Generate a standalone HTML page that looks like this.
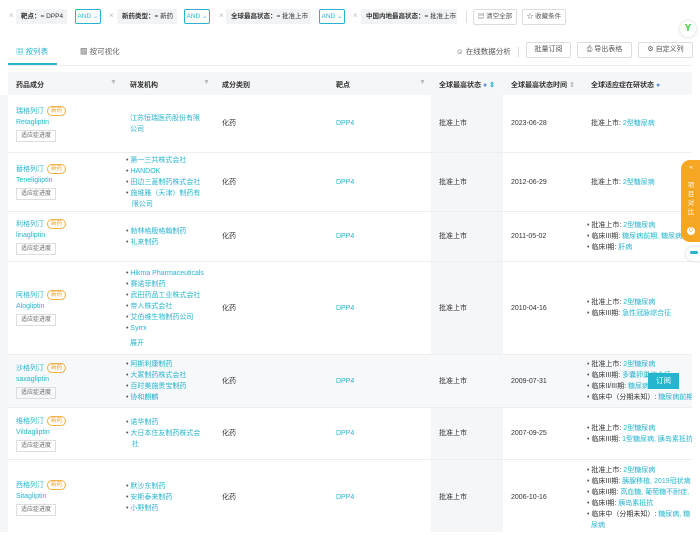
<!DOCTYPE html>
<html><head><meta charset="utf-8"><style>
*{box-sizing:border-box;margin:0;padding:0}
body{width:700px;height:532px;overflow:hidden;background:#fff;font-family:"Liberation Sans","Noto Sans CJK SC",sans-serif;font-size:7px;color:#333;position:relative}
.a{position:absolute;white-space:nowrap}
.x{color:#bbb;font-size:8px}
.chip{background:#f2f3f5;height:15px;line-height:15px;padding:0 5px;font-size:6.5px;color:#333}
.chip b{font-weight:bold}
.and{border:1px solid #26b5cf;color:#26b5cf;height:15px;line-height:13px;font-size:6.5px;text-align:center;border-radius:2px}
.btn{border:1px solid #ddd;height:16px;line-height:14px;font-size:7px;text-align:center;color:#555;border-radius:2px}
.row{position:absolute;left:8px;width:684px;border-bottom:1px solid #eee}
.c{position:absolute;top:0;bottom:0;display:flex;flex-direction:column;justify-content:center;line-height:11px;white-space:nowrap}
.t{color:#26b5cf}
.nm{color:#26b5cf;font-size:7px;line-height:11px}
.bd{display:inline-block;border:1px solid #f5b041;color:#f0a020;border-radius:6px;font-size:5.5px;line-height:8px;padding:0 3px;margin-left:3px;vertical-align:1px}
.pb{display:inline-block;border:1px solid #ddd;font-size:6px;color:#666;padding:0 4px;line-height:10px;margin-top:2px;white-space:nowrap}
.li:before{content:"• ";color:#555}
.g{color:#555}
</style></head><body>
<div class="a" style="left:0;top:95px;width:8px;height:437px;background:#f4f5f7"></div>
<span class="a x" style="left:9px;top:11px">×</span>
<div class="a chip" style="left:16px;top:9px;width:51px"><b>靶点：</b>= DPP4</div>
<div class="a and" style="left:75px;top:9px;width:26px">AND ⌄</div>
<span class="a x" style="left:109px;top:11px">×</span>
<div class="a chip" style="left:117px;top:9px;width:60px"><b>新药类型：</b>= 新药</div>
<div class="a and" style="left:184px;top:9px;width:26px">AND ⌄</div>
<span class="a x" style="left:219px;top:11px">×</span>
<div class="a chip" style="left:226px;top:9px;width:85px"><b>全球最高状态：</b>= 批准上市</div>
<div class="a and" style="left:319px;top:9px;width:26px">AND ⌄</div>
<span class="a x" style="left:353px;top:11px">×</span>
<div class="a chip" style="left:361px;top:9px;width:96px"><b>中国内地最高状态：</b>= 批准上市</div>
<div class="a" style="left:466px;top:11px;width:1px;height:12px;background:#ddd"></div>
<div class="a btn" style="left:473px;top:9px;width:44px;font-size:6.5px">▤ 清空全部</div>
<div class="a btn" style="left:522px;top:9px;width:44px;font-size:6.5px">☆ 收藏条件</div>
<div class="a" style="left:680px;top:21px;width:16px;height:16px;border-radius:50%;background:#fff;box-shadow:0 0 3px #ccc;color:#3c3;font-weight:bold;font-size:10px;text-align:center;line-height:16px">Y</div>
<div class="a" style="left:16px;top:46px;color:#26b5cf;font-size:7.5px">▦ 按列表</div>
<div class="a" style="left:80px;top:46px;color:#666;font-size:7.5px">▩ 按可视化</div>
<div class="a" style="left:8px;top:63px;width:49px;height:2px;background:#26b5cf"></div>
<div class="a" style="left:8px;top:65px;width:684px;height:1px;background:#eee"></div>
<div class="a g" style="left:456px;top:46px;font-size:7.5px">☺ 在线数据分析</div>
<div class="a" style="left:518px;top:47px;width:1px;height:10px;background:#ddd"></div>
<div class="a btn" style="left:526px;top:42px;width:45px">批量订阅</div>
<div class="a btn" style="left:577px;top:42px;width:55px">⎙ 导出表格</div>
<div class="a btn" style="left:638px;top:42px;width:55px">⚙ 自定义列</div>
<div class="a" style="left:8px;top:72px;width:684px;height:23px;background:#f5f6f8"></div>
<div class="a" style="left:431px;top:72px;width:72px;height:460px;background:#f5f6f8"></div>
<div class="a" style="left:8px;top:355px;width:684px;height:53px;background:#f7f8fa"></div>
<div class="a" style="top:80px;left:16px;font-weight:bold">药品成分</div><span class="a" style="left:110px;top:79px;color:#bbb">▼</span>
<div class="a" style="top:80px;left:130px;font-weight:bold">研发机构</div><span class="a" style="left:203px;top:79px;color:#bbb">▼</span>
<div class="a" style="top:80px;left:222px;font-weight:bold">成分类别</div>
<div class="a" style="top:80px;left:336px;font-weight:bold">靶点</div><span class="a" style="left:419px;top:79px;color:#bbb">▼</span>
<div class="a" style="top:80px;left:439px;font-weight:bold">全球最高状态 <span style="color:#6a8fd0">●</span> <span style="color:#26b5cf">⇕</span></div>
<div class="a" style="top:80px;left:511px;font-weight:bold">全球最高状态时间 <span style="color:#bbb">⇕</span></div>
<div class="a" style="top:80px;left:591px;font-weight:bold">全球适应症在研状态 <span style="color:#6a8fd0">●</span></div>

<div class="row" style="top:95px;height:58px">
<div class="c" style="left:8px"><div class="nm">瑞格列汀<span class="bd">新药</span></div><div class="nm">Retagliptin</div><div><span class="pb">适应症进度</span></div></div>
<div class="c t" style="left:122px">江苏恒瑞医药股份有限<br>公司</div>
<div class="c" style="left:214px">化药</div><div class="c t" style="left:328px">DPP4</div>
<div class="c" style="left:431px">批准上市</div><div class="c" style="left:503px">2023-06-28</div>
<div class="c" style="left:583px"><div>批准上市: <span class="t">2型糖尿病</span></div></div></div>

<div class="row" style="top:153px;height:59px">
<div class="c" style="left:8px"><div class="nm">替格列汀<span class="bd">新药</span></div><div class="nm">Teneligliptin</div><div><span class="pb">适应症进度</span></div></div>
<div class="c t" style="left:118px"><div class="li">第一三共株式会社</div><div class="li">HANDOK</div><div class="li">田边三菱制药株式会社</div><div class="li">施维雅（天津）制药有</div><div>&nbsp;&nbsp;&nbsp;限公司</div></div>
<div class="c" style="left:214px">化药</div><div class="c t" style="left:328px">DPP4</div>
<div class="c" style="left:431px">批准上市</div><div class="c" style="left:503px">2012-06-29</div>
<div class="c" style="left:583px"><div>批准上市: <span class="t">2型糖尿病</span></div></div></div>

<div class="row" style="top:212px;height:50px">
<div class="c" style="left:8px"><div class="nm">利格列汀<span class="bd">新药</span></div><div class="nm">linagliptin</div><div><span class="pb">适应症进度</span></div></div>
<div class="c t" style="left:118px"><div class="li">勃林格殷格翰制药</div><div class="li">礼来制药</div></div>
<div class="c" style="left:214px">化药</div><div class="c t" style="left:328px">DPP4</div>
<div class="c" style="left:431px">批准上市</div><div class="c" style="left:503px">2011-05-02</div>
<div class="c" style="left:579px"><div class="li">批准上市: <span class="t">2型糖尿病</span></div><div class="li">临床III期: <span class="t">糖尿病前期, 糖尿病并</span></div><div class="li">临床I期: <span class="t">肝病</span></div></div></div>

<div class="row" style="top:262px;height:93px">
<div class="c" style="left:8px"><div class="nm">阿格列汀<span class="bd">新药</span></div><div class="nm">Alogliptin</div><div><span class="pb">适应症进度</span></div></div>
<div class="c t" style="left:118px"><div class="li">Hikma Pharmaceuticals</div><div class="li">赛诺菲制药</div><div class="li">武田药品工业株式会社</div><div class="li">帝人株式会社</div><div class="li">艾伯维生物制药公司</div><div class="li">Syrrx</div><div style="margin-top:4px;padding-left:4px">展开</div></div>
<div class="c" style="left:214px">化药</div><div class="c t" style="left:328px">DPP4</div>
<div class="c" style="left:431px">批准上市</div><div class="c" style="left:503px">2010-04-16</div>
<div class="c" style="left:579px"><div class="li">批准上市: <span class="t">2型糖尿病</span></div><div class="li">临床III期: <span class="t">急性冠脉综合征</span></div></div></div>

<div class="row" style="top:355px;height:53px">
<div class="c" style="left:8px"><div class="nm">沙格列汀<span class="bd">新药</span></div><div class="nm">saxagliptin</div><div><span class="pb">适应症进度</span></div></div>
<div class="c t" style="left:118px"><div class="li">阿斯利康制药</div><div class="li">大冢制药株式会社</div><div class="li">百时美施贵宝制药</div><div class="li">协和麒麟</div></div>
<div class="c" style="left:214px">化药</div><div class="c t" style="left:328px">DPP4</div>
<div class="c" style="left:431px">批准上市</div><div class="c" style="left:503px">2009-07-31</div>
<div class="c" style="left:579px"><div class="li">批准上市: <span class="t">2型糖尿病</span></div><div class="li">临床III期: <span class="t">多囊卵巢综合征</span></div><div class="li">临床II/III期: <span class="t">糖尿病前期</span></div><div class="li">临床中（分期未知）: <span class="t">糖尿病前期</span></div></div></div>

<div class="row" style="top:408px;height:52px">
<div class="c" style="left:8px"><div class="nm">维格列汀<span class="bd">新药</span></div><div class="nm">Vildagliptin</div><div><span class="pb">适应症进度</span></div></div>
<div class="c t" style="left:118px"><div class="li">诺华制药</div><div class="li">大日本住友制药株式会</div><div>&nbsp;&nbsp;&nbsp;社</div></div>
<div class="c" style="left:214px">化药</div><div class="c t" style="left:328px">DPP4</div>
<div class="c" style="left:431px">批准上市</div><div class="c" style="left:503px">2007-09-25</div>
<div class="c" style="left:579px"><div class="li">批准上市: <span class="t">2型糖尿病</span></div><div class="li">临床III期: <span class="t">1型糖尿病, 胰岛素抵抗</span></div></div></div>

<div class="row" style="top:460px;height:75px;border:none">
<div class="c" style="left:8px"><div class="nm">西格列汀<span class="bd">新药</span></div><div class="nm">Sitagliptin</div><div><span class="pb">适应症进度</span></div></div>
<div class="c t" style="left:118px"><div class="li">默沙东制药</div><div class="li">安斯泰来制药</div><div class="li">小野制药</div></div>
<div class="c" style="left:214px">化药</div><div class="c t" style="left:328px">DPP4</div>
<div class="c" style="left:431px">批准上市</div><div class="c" style="left:503px">2006-10-16</div>
<div class="c" style="left:579px"><div class="li">批准上市: <span class="t">2型糖尿病</span></div><div class="li">临床III期: <span class="t">胰腺移植, 2019冠状病</span></div><div class="li">临床II期: <span class="t">高血糖, 葡萄糖不耐症,</span></div><div class="li">临床I期: <span class="t">胰岛素抵抗</span></div><div class="li">临床中（分期未知）: <span class="t">糖尿病, 糖</span></div><div class="t" style="padding-left:4px">尿病</div></div></div>

<div class="a" style="left:692px;top:66px;width:8px;height:466px;background:#fff"></div>
<div class="a" style="left:681px;top:160px;width:20px;height:82px;background:#f5a623;border-radius:9px 0 0 9px;color:#fff;font-size:6.5px;text-align:center;line-height:9px;padding-top:3px">«<br><br>项<br>目<br>对<br>比<br>·<br><span style="display:inline-block;width:8px;height:8px;border-radius:50%;background:#fff;color:#f5a623;line-height:8px">0</span></div>
<div class="a" style="left:686px;top:247px;width:16px;height:14px;border-radius:50% 0 0 50%;background:#fff;box-shadow:0 0 3px #ccc"></div>
<div class="a" style="left:690px;top:251px;width:8px;height:3px;background:#26b5cf;border-radius:2px"></div>
<div class="a" style="left:648px;top:373px;width:31px;height:16px;background:#26b5cf;color:#fff;text-align:center;line-height:16px;font-size:7.5px">订阅</div>
</body></html>
